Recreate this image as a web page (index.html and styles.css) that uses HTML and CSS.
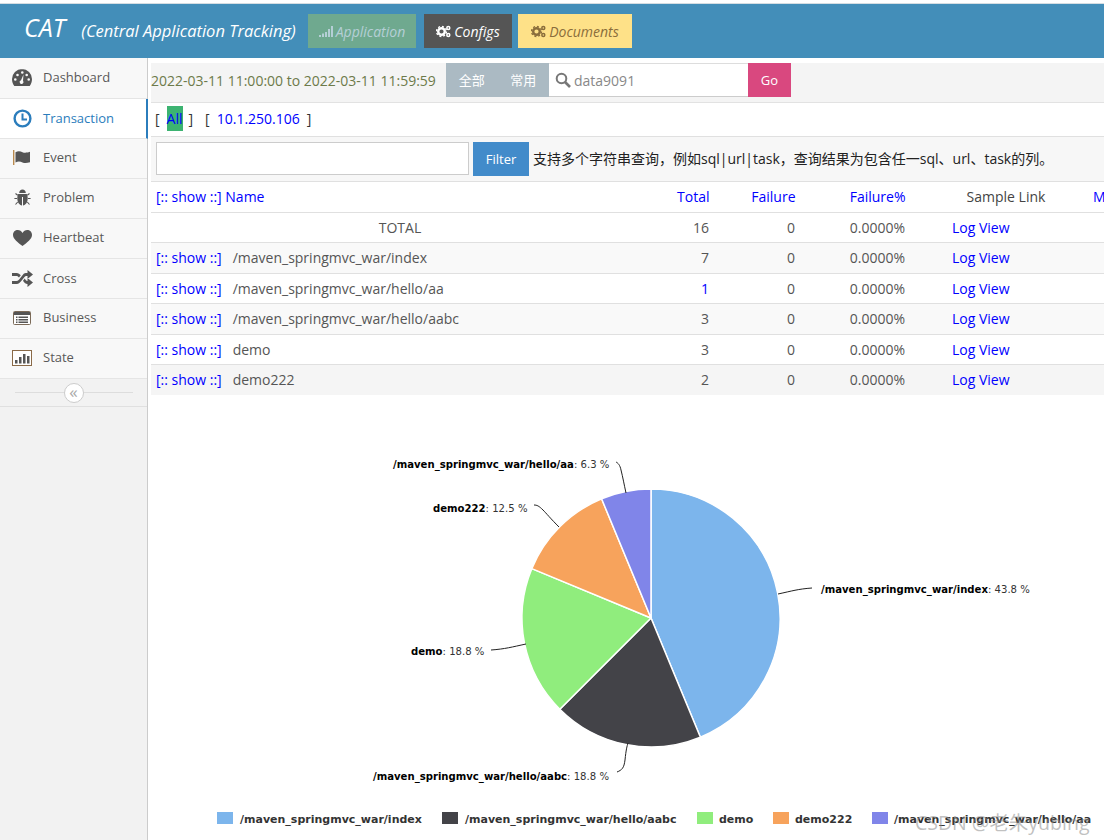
FILE: index.html
```html
<!DOCTYPE html>
<html lang="zh">
<head>
<meta charset="utf-8">
<title>CAT</title>
<link rel="stylesheet" href="styles.css">
</head>
<body>
<header class="navbar">
  <div class="brand"><span class="brand-cat">CAT</span><span class="brand-sub">(Central Application Tracking)</span></div>
  <nav class="nav-buttons">
    <a class="nav-btn btn-app"><svg class="ico" width="14" height="12" viewBox="0 0 14 12"><path fill="currentColor" d="M0 10h2v2H0zM3 8.500h2V12H3zM6 7h2v5H6zM9 4h2v8H9zM12 1h2v11h-2z"/></svg>Application</a>
    <a class="nav-btn btn-cfg"><svg class="ico" width="15" height="13" viewBox="0 0 15 13"><circle cx="5.500" cy="6.500" r="3.300" fill="none" stroke="currentColor" stroke-width="2.400"/><circle cx="5.500" cy="6.500" r="5" fill="none" stroke="currentColor" stroke-width="1.400" stroke-dasharray="2 1.900"/><circle cx="12.300" cy="3" r="1.500" fill="none" stroke="currentColor" stroke-width="1.500"/><circle cx="12.300" cy="10" r="1.500" fill="none" stroke="currentColor" stroke-width="1.500"/></svg>Configs</a>
    <a class="nav-btn btn-doc"><svg class="ico" width="15" height="13" viewBox="0 0 15 13"><circle cx="5.500" cy="6.500" r="3.300" fill="none" stroke="currentColor" stroke-width="2.400"/><circle cx="5.500" cy="6.500" r="5" fill="none" stroke="currentColor" stroke-width="1.400" stroke-dasharray="2 1.900"/><circle cx="12.300" cy="3" r="1.500" fill="none" stroke="currentColor" stroke-width="1.500"/><circle cx="12.300" cy="10" r="1.500" fill="none" stroke="currentColor" stroke-width="1.500"/></svg>Documents</a>
  </nav>
</header>
<div class="layout">
  <aside class="sidebar">
    <a class="side-item"><span class="side-ico"><svg width="20" height="17" viewBox="0 0 20 17"><path fill="#555" fill-rule="evenodd" d="M10 0a10 10 0 0 0-10 10c0 2.800.8 5 2.300 7h15.400c1.500-2 2.300-4.200 2.300-7a10 10 0 0 0-10-10zM9 3.500a1.300 1.300 0 1 0 2.600 0 1.300 1.300 0 0 0-2.600 0zM4.200 6a1.300 1.300 0 1 0 2.600 0 1.300 1.300 0 0 0-2.600 0zM13.400 6a1.300 1.300 0 1 0 2.600 0 1.300 1.300 0 0 0-2.600 0zM2 10.500a1.300 1.300 0 1 0 2.600 0 1.300 1.300 0 0 0-2.600 0zM15.400 10.500a1.300 1.300 0 1 0 2.600 0 1.300 1.300 0 0 0-2.600 0zM11.500 5.500L9 11.200a1.900 1.900 0 1 0 2 .6z"/></svg></span>Dashboard</a>
    <a class="side-item active"><span class="side-ico"><svg width="19" height="19" viewBox="0 0 19 19"><circle cx="9.500" cy="9.500" r="7.900" fill="none" stroke="#2b7dbc" stroke-width="2.400"/><path fill="none" stroke="#2b7dbc" stroke-width="2" d="M9.500 4.500v6h4.500"/></svg></span>Transaction</a>
    <a class="side-item"><span class="side-ico"><svg width="19" height="16" viewBox="0 0 19 16"><path fill="#b98a4e" d="M0 0h1.400v15H0z"/><path fill="#555" d="M2.500 2.200c3-1.600 5-.8 7 0s4 .7 7.500-.4v10.400c-3.500 1.100-5.500 1-7.500.2s-4-1.500-7 0z"/></svg></span>Event</a>
    <a class="side-item"><span class="side-ico"><svg width="17" height="17" viewBox="0 0 17 17"><path fill="#555" d="M5.200 4c0-2 1.400-3.500 3.300-3.500S11.800 2 11.800 4zM4.300 5h8.400c.7 1 1 2.400 1 4.200 0 4-2 6.800-4.700 7.300V8H8v8.500C5.300 16 3.300 13.200 3.300 9.200c0-1.800.3-3.200 1-4.200z"/><path fill="none" stroke="#555" stroke-width="1.100" d="M3.700 6.200L1.500 4.500M13.300 6.200l2.200-1.700M3 9.500H.4M14 9.500h2.600M3.700 13l-2.200 2.500M13.300 13l2.200 2.500"/></svg></span>Problem</a>
    <a class="side-item"><span class="side-ico"><svg width="19" height="16" viewBox="0 0 19 16"><path fill="#555" d="M9.500 16C5 12.400 0 9 0 4.900 0 2 2.200 0 4.800 0c2 0 3.700 1.100 4.700 3C10.500 1.100 12.200 0 14.200 0 16.800 0 19 2 19 4.900c0 4.100-5 7.500-9.500 11.100z"/></svg></span>Heartbeat</a>
    <a class="side-item item-cross"><span class="side-ico"><svg width="21" height="17" viewBox="0 0 21 17"><path fill="#555" d="M0 3h4.500c2 0 3.200 1 4.300 2.300L7 7.600C6.200 6.500 5.500 6 4.500 6H0zM0 11h4.500c1.800 0 2.600-1.200 4.200-3.400l2-2.700C12.400 2.800 13.700 3 15.500 3V0L21 4.500 15.500 9V6c-1.500 0-2.200-.2-3.400 1.400l-2 2.700C8.400 12.500 7 14 4.500 14H0zM11 10.700l1.800-2.200c.7 1.200 1.300 2.500 2.700 2.500V8l5.500 4.500-5.500 4.500v-3c-2.200 0-3.300-1.400-4.500-3.300z"/></svg></span>Cross</a>
    <a class="side-item"><span class="side-ico"><svg width="18" height="14" viewBox="0 0 18 14"><rect x=".5" y=".5" width="17" height="13" rx="1" fill="#fff" stroke="#7b6a58"/><path fill="#555" d="M1 1h16v3H1zM3 5.500h1.500V7H3zM5.500 5.500H15V7H5.500zM3 8h1.500v1.500H3zM5.500 8H15v1.500H5.500zM3 10.500h1.500V12H3zM5.500 10.500H15V12H5.500z"/></svg></span>Business</a>
    <a class="side-item"><span class="side-ico"><svg width="20" height="16" viewBox="0 0 20 16"><rect x=".5" y=".5" width="19" height="15" fill="#fff" stroke="#8a6a48"/><path fill="#555" d="M3 10h2.500v3.500H3zM7 7h2.500v6.500H7zM11 4h2.500v9.500H11zM15 6h2.500v7.500H15z"/></svg></span>State</a>
    <div class="collapse"><span class="collapse-btn">«</span></div>
  </aside>
  <main class="main">
    <div class="toolbar">
      <span class="range">2022-03-11 11:00:00 to 2022-03-11 11:59:59</span>
      <div class="pills"><a class="pill">全部</a><a class="pill">常用</a></div>
      <div class="search"><svg width="16" height="16" viewBox="0 0 16 16"><circle cx="6.500" cy="6.500" r="4.800" fill="none" stroke="#777" stroke-width="2"/><path stroke="#777" stroke-width="2.600" d="M10 10l5 5"/></svg><span class="search-text">data9091</span></div>
      <a class="go">Go</a>
    </div>
    <div class="crumbs">[<a class="all">All</a>]<span class="crumb-gap">[</span><a class="ip">10.1.250.106</a>]</div>
    <div class="filter">
      <input class="filter-input" type="text" aria-label="filter">
      <a class="filter-btn">Filter</a>
      <span class="hint">支持多个字符串查询，例如sql|url|task，查询结果为包含任一sql、url、task的列。</span>
    </div>
    <table class="report">
      <colgroup><col class="c-name"><col class="c-total"><col class="c-fail"><col class="c-pct"><col class="c-link"><col class="c-more"></colgroup>
      <thead>
        <tr><th class="name"><a>[:: show ::]</a> <a>Name</a></th><th class="num"><a>Total</a></th><th class="num"><a>Failure</a></th><th class="num"><a>Failure%</a></th><th class="sample">Sample Link</th><th class="more"><a>M</a></th></tr>
      </thead>
      <tbody>
        <tr><td class="total">TOTAL</td><td class="num">16</td><td class="num">0</td><td class="num">0.0000%</td><td class="log"><a>Log View</a></td><td></td></tr>
        <tr class="odd"><td><a>[:: show ::]</a><span class="tname">/maven_springmvc_war/index</span></td><td class="num">7</td><td class="num">0</td><td class="num">0.0000%</td><td class="log"><a>Log View</a></td><td></td></tr>
        <tr><td><a>[:: show ::]</a><span class="tname">/maven_springmvc_war/hello/aa</span></td><td class="num"><a>1</a></td><td class="num">0</td><td class="num">0.0000%</td><td class="log"><a>Log View</a></td><td></td></tr>
        <tr class="odd"><td><a>[:: show ::]</a><span class="tname">/maven_springmvc_war/hello/aabc</span></td><td class="num">3</td><td class="num">0</td><td class="num">0.0000%</td><td class="log"><a>Log View</a></td><td></td></tr>
        <tr><td><a>[:: show ::]</a><span class="tname">demo</span></td><td class="num">3</td><td class="num">0</td><td class="num">0.0000%</td><td class="log"><a>Log View</a></td><td></td></tr>
        <tr class="even-dark"><td><a>[:: show ::]</a><span class="tname">demo222</span></td><td class="num">2</td><td class="num">0</td><td class="num">0.0000%</td><td class="log"><a>Log View</a></td><td></td></tr>
      </tbody>
    </table>
    <svg class="chart" width="956" height="445" viewBox="148 395 956 445">
      <g stroke="#fff" stroke-width="1.500" stroke-linejoin="round">
        <path fill="#7cb5ec" d="M651 618V489A129 129 0 0 1 700.400 737.200z"/>
        <path fill="#434348" d="M651 618L700.400 737.200A129 129 0 0 1 559.800 709.200z"/>
        <path fill="#90ed7d" d="M651 618L559.800 709.200A129 129 0 0 1 531.800 568.600z"/>
        <path fill="#f7a35c" d="M651 618L531.800 568.600A129 129 0 0 1 601.600 498.800z"/>
        <path fill="#8085e9" d="M651 618L601.600 498.800A129 129 0 0 1 651 489z"/>
      </g>
      <g fill="none" stroke="#222" stroke-width="1">
        <path d="M778 594C792 591 798 589 812 588"/>
        <path d="M617 772C622 770 624 768 625 760C626 750 627 746 628 743"/>
        <path d="M526 644C512 647 505 649 491 650"/>
        <path d="M559 527C551 519 546 513 543 510C539 506 537 505 534 505"/>
        <path d="M626 493C624 484 623 478 621 470C620 465 618 463 616 462"/>
      </g>
      <g class="lbl">
        <text x="821" y="593"><tspan class="b">/maven_springmvc_war/index</tspan>: 43.8 %</text>
        <text x="373" y="780"><tspan class="b">/maven_springmvc_war/hello/aabc</tspan>: 18.8 %</text>
        <text x="411" y="655"><tspan class="b">demo</tspan>: 18.8 %</text>
        <text x="433" y="512"><tspan class="b">demo222</tspan>: 12.5 %</text>
        <text x="393" y="468"><tspan class="b">/maven_springmvc_war/hello/aa</tspan>: 6.3 %</text>
      </g>
      <g class="legend">
        <rect x="217" y="812" width="16" height="12" fill="#7cb5ec"/><text x="240" y="823">/maven_springmvc_war/index</text>
        <rect x="442" y="812" width="16" height="12" fill="#434348"/><text x="465" y="823">/maven_springmvc_war/hello/aabc</text>
        <rect x="697" y="812" width="16" height="12" fill="#90ed7d"/><text x="719" y="823">demo</text>
        <rect x="773" y="812" width="16" height="12" fill="#f7a35c"/><text x="795" y="823">demo222</text>
        <rect x="872" y="812" width="16" height="12" fill="#8085e9"/><text x="894" y="823">/maven_springmvc_war/hello/aa</text>
      </g>
    </svg>
  </main>
</div>
<div class="watermark">CSDN @老朱yubing</div>
</body>
</html>
```
FILE: styles.css
```css
html, body { margin: 0; padding: 0; height: 840px; overflow: hidden; background: #fff; }
body { font-family: "Open Sans", "Noto Sans CJK SC", sans-serif; font-size: 14px; color: #444; position: relative; }
a { text-decoration: none; }

.navbar { margin-top: 3px; border-top: 1px solid #d5dde2; background: #438eb9; display: flex; align-items: center; box-sizing: border-box; height: 55px; color: #fff; }
.brand { width: 308px; padding-left: 24px; box-sizing: border-box; font-style: italic; white-space: nowrap; display: flex; align-items: baseline; margin-top: -8px; }
.brand-cat { font-size: 25px; }
.brand-sub { font-size: 16.500px; margin-left: 16px; }
.nav-buttons { display: flex; }
.nav-btn { height: 34px; display: flex; align-items: center; justify-content: center; font-style: italic; font-size: 14px; box-sizing: border-box; white-space: nowrap; }
.ico { margin-right: 3px; }
.btn-app { background: #6fa98f; color: #b5cfd6; width: 108px; }
.btn-cfg { background: #555; color: #fff; width: 88px; margin-left: 8px; }
.btn-doc { background: #fee188; color: #8a6d3b; width: 114px; margin-left: 6px; }

.layout { display: flex; height: 782px; }
.sidebar { width: 148px; flex: none; background: #f2f2f2; border-right: 1px solid #ccc; box-sizing: border-box; }
.side-item { display: flex; align-items: center; height: 40px; background: #f8f8f8; border-bottom: 1px solid #e5e5e5; box-sizing: border-box; font-size: 13px; color: #585858; padding-bottom: 4px; }
.side-item:first-child { height: 41px; padding-bottom: 3px; }
.side-ico { width: 43px; display: flex; justify-content: center; padding-left: 1px; box-sizing: border-box; margin-top: 2px; }
.side-item.active { background: #fff; color: #2b7dbc; border-right: 2px solid #2b7dbc; margin-right: -1px; padding-bottom: 2px; }
.item-cross { padding-bottom: 2px; }
.collapse { height: 27px; display: flex; align-items: center; justify-content: center; border-bottom: 1px solid #e0e0e0; background: linear-gradient(#ddd, #ddd) center / 118px 1px no-repeat; background-color: #f2f2f2; }
.collapse-btn { width: 18px; height: 18px; line-height: 15px; text-align: center; background: #fff; border: 1px solid #ccc; border-radius: 50%; color: #aaa; font-size: 17px; box-sizing: content-box; }

.main { flex: 1; min-width: 0; padding: 5px 0 0 3px; overflow: hidden; position: relative; }
.toolbar { height: 40px; background: #f4f4f4; border-bottom: 1px solid #e2e2e2; box-sizing: border-box; display: flex; align-items: flex-start; }
.range { width: 295px; line-height: 35px; white-space: nowrap; color: #6d7a4a; font-size: 14px; }
.pills { display: flex; background: #abbac3; height: 34px; width: 103px; color: #fff; font-size: 13px; }
.pill { flex: 1; text-align: center; line-height: 34px; }
.search { width: 199px; height: 34px; box-sizing: border-box; background: #fff; border-bottom: 1px solid #ccc; border-top: 1px solid #ddd; display: flex; align-items: center; padding-left: 6px; color: #888; font-size: 14px; }
.search-text { margin-left: 3px; }
.go { width: 43px; height: 34px; line-height: 34px; text-align: center; color: #fff; font-size: 13px; background: #d9487f; }

.crumbs { height: 33px; line-height: 32px; padding-left: 4px; font-size: 14px; color: #333; box-sizing: border-box; }
.all { color: #00f; background: #3cb371; margin: 0 6px 0 7px; padding: 3px 0; }
.crumb-gap { margin-left: 12px; }
.ip { color: #00f; margin: 0 7px 0 7px; }

.filter { height: 45.500px; background: #f7f7f7; border-top: 1px solid #e0e0e0; border-bottom: 1px solid #e0e0e0; box-sizing: border-box; display: flex; align-items: flex-start; padding: 5px 0 0 5px; }
.filter-input { width: 313px; height: 33px; box-sizing: border-box; background: #fff; border: 1px solid #ccc; padding: 0; margin: 0; }
.filter-btn { width: 56px; height: 34px; margin-left: 4px; background: #428bca; color: #fff; line-height: 34px; text-align: center; font-size: 13px; }
.hint { margin-left: 4px; font-size: 14px; line-height: 33px; color: #222; white-space: nowrap; }

.report { table-layout: fixed; border-collapse: collapse; width: 1000px; font-size: 14px; color: #555; }
.c-name { width: 498px; } .c-total { width: 65px; } .c-fail { width: 86px; } .c-pct { width: 110px; } .c-link { width: 178px; } .c-more { width: 63px; }
.report th, .report td { padding: 0 5px; height: 30.500px; box-sizing: border-box; border-bottom: 1px solid #e0e0e0; white-space: nowrap; overflow: hidden; font-weight: 400; text-align: left; }
.report a { color: #00f; }
.report .num { text-align: right; }
.report th.num { padding-right: 4.500px; }
.report th.sample { text-align: center; padding-left: 19px; color: #444; }
.report .total { text-align: center; }
.report .log { padding-left: 42px; }
.report .more { padding: 0 0 0 5px; }
.tname { margin-left: 11px; }
.odd td { background: #f9f9f9; }
.even-dark td { background: #f5f5f5; border-bottom: none; padding-bottom: 1px; }

.chart { display: block; margin-left: -3px; }
.lbl text { font-family: "DejaVu Sans", sans-serif; font-size: 10.100px; fill: #333; }
.lbl .b { font-weight: 700; fill: #000; }
.legend text { font-family: "DejaVu Sans", sans-serif; font-size: 11px; font-weight: 700; fill: #333; }

.watermark { position: absolute; left: 915px; top: 807px; font-size: 19.500px; color: rgba(140,140,140,.55); white-space: nowrap; pointer-events: none; }
```
